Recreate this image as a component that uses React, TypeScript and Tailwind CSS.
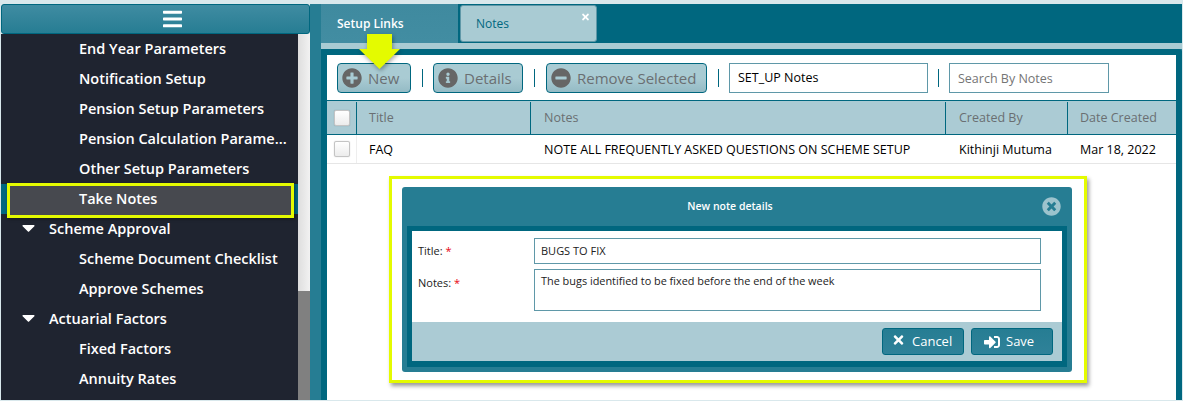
import { FaBars, FaCaretDown, FaInfoCircle, FaMinusCircle, FaPlusCircle, FaSignInAlt, FaTimes, FaTimesCircle } from 'react-icons/fa';

const font = { fontFamily: '"Open Sans", sans-serif' };

const menu = [
	{ label: 'End Year Parameters', level: 2 },
	{ label: 'Notification Setup', level: 2 },
	{ label: 'Pension Setup Parameters', level: 2 },
	{ label: 'Pension Calculation Parame...', level: 2 },
	{ label: 'Other Setup Parameters', level: 2 },
	{ label: 'Take Notes', level: 2, active: true },
	{ label: 'Scheme Approval', level: 1 },
	{ label: 'Scheme Document Checklist', level: 2 },
	{ label: 'Approve Schemes', level: 2 },
	{ label: 'Actuarial Factors', level: 1 },
	{ label: 'Fixed Factors', level: 2 },
	{ label: 'Annuity Rates', level: 2 },
];

function Sidebar() {
	return (
		<div className="w-[309px] shrink-0 flex flex-col">
			<div className="h-[30px] shrink-0 rounded-[3px] border border-[#00677f] bg-gradient-to-b from-[#3f8ca2] to-[#267d93] bg-[#267d93] flex items-center justify-center pl-[34px] text-white">
				<FaBars className="w-[19px] h-[22px]" />
			</div>
			<div className="flex-1 flex min-h-0">
				<div className="w-[297px] bg-[#1f2430] overflow-hidden">
					{menu.map((item) => (
						<div
							key={item.label}
							className={`relative h-[30px] flex items-center text-white text-[14.5px] font-semibold whitespace-nowrap ${item.level === 2 ? 'pl-[78px]' : 'pl-[48px]'} ${item.active ? 'bg-[#00677f]' : ''}`}
						>
							{item.level === 1 && <FaCaretDown className="absolute left-[17px] top-[3px] w-[21px] h-[21px]" />}
							{item.active ? (
								<>
									<div className="absolute left-[6px] top-[-1px] w-[287px] h-[35px] border-[3px] border-[#e4fb00] bg-[#47494f] shadow-[1px_1px_3px_rgba(0,0,0,0.4)]" />
									<span className="relative">{item.label}</span>
								</>
							) : (
								item.label
							)}
						</div>
					))}
				</div>
				<div className="w-[12px] flex flex-col">
					<div className="h-[257px] bg-gradient-to-r from-[#dedede] to-[#f2f2f2]" />
					<div className="flex-1 bg-[#808080]" />
				</div>
			</div>
		</div>
	);
}

function ToolButton({ icon, label, width }: { icon: React.ReactNode; label: string; width: string }) {
	return (
		<div className={`${width} h-[30px] shrink-0 rounded-[4px] border border-[#00677f] bg-gradient-to-b from-[#a9cbd3] via-[#a9cbd3] to-[#94bbc5] flex items-center pl-[4px] gap-[6px] text-[#6a6f72] text-[15px] whitespace-nowrap`}>
			{icon}
			<span className="pt-px">{label}</span>
		</div>
	);
}

function Sep() {
	return <div className="w-px h-[18px] bg-[#00677f] shrink-0" />;
}

function Toolbar() {
	const iconClass = 'w-[20px] h-[20px] text-[#666666]';
	return (
		<div className="h-[45px] flex items-center pl-[10px]">
			<ToolButton width="w-[74px]" label="New" icon={<FaPlusCircle className={iconClass} />} />
			<div className="w-[22px] flex justify-center"><Sep /></div>
			<ToolButton width="w-[90px]" label="Details" icon={<FaInfoCircle className={iconClass} />} />
			<div className="w-[23px] flex justify-center"><Sep /></div>
			<ToolButton width="w-[161px]" label="Remove Selected" icon={<FaMinusCircle className={iconClass} />} />
			<div className="w-[22px] flex justify-center"><Sep /></div>
			<div className="w-[199px] h-[30px] border border-[#5f98a8] flex items-center pl-[8px] pt-px text-[12.5px] text-black">SET_UP Notes</div>
			<div className="w-[21px] flex justify-center"><Sep /></div>
			<div className="w-[160px] h-[30px] border border-[#5f98a8] flex items-center pl-[8px] pt-[3px] text-[12.5px] text-[#757575]">Search By Notes</div>
		</div>
	);
}

function Check() {
	return <div className="w-[16px] h-[16px] rounded-[2px] border border-[#c4c4c4] bg-gradient-to-b from-white to-[#ececec] shadow-[0_0_1px_rgba(0,0,0,0.3)]" />;
}

function NotesTable() {
	const cols = ['w-[30px]', 'w-[174px]', 'w-[415px]', 'w-[122px]', 'flex-1'];
	const pads = ['pl-[12px]', 'pl-[13px]', 'pl-[13px]', 'pl-[12px]'];
	const head = ['Title', 'Notes', 'Created By', 'Date Created'];
	const row = ['FAQ', 'NOTE ALL FREQUENTLY ASKED QUESTIONS ON SCHEME SETUP', 'Kithinji Mutuma', 'Mar 18, 2022'];
	return (
		<div>
			<div className="h-[35px] border-t border-b border-t-[#00677f] border-b-[#00677f] bg-[#abcbd4] flex text-[12.5px] text-[#6a6f72] pt-px">
				<div className={`${cols[0]} border-r border-[#00677f] flex items-center justify-center`}><Check /></div>
				{head.map((h, i) => (
					<div key={h} className={`${cols[i + 1]} ${pads[i]} ${i < 3 ? 'border-r border-[#00677f]' : ''} flex items-center`}>{h}</div>
				))}
			</div>
			<div className="h-[29px] border-b border-[#e6e6e6] flex text-[12.5px] text-black">
				<div className={`${cols[0]} border-r border-[#eeeeee] flex items-center justify-center`}><Check /></div>
				{row.map((c, i) => (
					<div key={c} className={`${cols[i + 1]} ${pads[i]} flex items-center pt-[2px] whitespace-nowrap`}>{c}</div>
				))}
			</div>
		</div>
	);
}

function NoteDialog() {
	return (
		<div className="absolute left-[62px] top-[121px] w-[698px] h-[207px] border-[3px] border-[#e4fb00] bg-white shadow-[2px_3px_4px_rgba(0,0,0,0.4)] px-[10px] pt-[8px]">
			<div className="w-[670px] h-[185px] rounded-[3px] bg-[#267d93] flex flex-col px-[5px] pb-[5px]">
				<div className="h-[39px] shrink-0 relative flex items-center justify-center pr-[14px] text-white text-[10.5px] font-semibold">
					New note details
					<FaTimesCircle className="absolute right-[6px] top-[10px] w-[19px] h-[19px] text-[#9cc3cd]" />
				</div>
				<div className="flex-1 border-x-[5px] border-t-[5px] border-b-[6px] border-[#00677f] bg-white flex flex-col">
					<div className="flex-1 relative text-[11px] text-[#222222]">
						<div className="flex items-center pt-[7px]">
							<div className="w-[122px] pl-[6px]">Title: <span className="text-red-600">*</span></div>
							<div className="w-[507px] h-[26px] border border-[#5f98a8] flex items-center pl-[6px] text-[11px]">BUGS TO FIX</div>
						</div>
						<div className="flex items-start pt-[5px]">
							<div className="w-[122px] pl-[6px] pt-[6px]">Notes: <span className="text-red-600">*</span></div>
							<div className="w-[507px] h-[42px] border border-[#5f98a8] pl-[6px] pt-[3px] text-[10.9px]">The bugs identified to be fixed before the end of the week</div>
						</div>
					</div>
					<div className="h-[39px] shrink-0 bg-[#abcbd4] flex items-center justify-end gap-[7px] pr-[9px]">
						<div className="w-[82px] h-[27px] rounded-[3px] border border-[#00677f] bg-gradient-to-b from-[#267d93] to-[#2f8299] flex items-center pl-[10px] gap-[8px] text-white text-[13px]">
							<FaTimes className="w-[11px] h-[14px] -mt-[4px]" />
							Cancel
						</div>
						<div className="w-[82px] h-[27px] rounded-[3px] border border-[#00677f] bg-gradient-to-b from-[#267d93] to-[#2f8299] flex items-center pl-[11px] gap-[5px] text-white text-[13px]">
							<FaSignInAlt className="w-[18px] h-[16px]" />
							Save
						</div>
					</div>
				</div>
			</div>
		</div>
	);
}

function Arrow() {
	return (
		<svg className="absolute left-[32px] top-[-21px] drop-shadow-[1px_2px_2px_rgba(0,0,0,0.35)]" width="42" height="36" viewBox="0 0 42 36">
			<path d="M8 0H33V15H41L20.5 35L0 15H8Z" fill="#e4fb00" />
		</svg>
	);
}

function Content() {
	return (
		<div className="flex-1 bg-[#267d93] pl-[11px] flex flex-col">
			<div className="h-[39px] shrink-0 bg-[#00677f] flex">
				<div className="w-[137px] bg-gradient-to-b from-[#3f8a9f] to-[#428da2] flex items-center pl-[16px] text-white text-[12px] font-semibold">Setup Links</div>
				<div className="w-[137px] ml-[2px] mt-px mb-px relative rounded-[3px] border border-[#5f98a8] bg-[#a9cbd3] flex items-center pl-[15px] text-[#00677f] text-[12px]">
					Notes
					<FaTimes className="absolute right-[6px] top-[6px] w-[9px] h-[10px] text-white" />
				</div>
			</div>
			<div className="h-[6px] shrink-0 bg-[#a9cbd3]" />
			<div className="flex-1 relative rounded-tr-[4px] border-x-[6px] border-t-[6px] border-[#00677f] bg-white mr-0 flex flex-col">
				<Toolbar />
				<NotesTable />
				<Arrow />
				<NoteDialog />
			</div>
		</div>
	);
}

export default function App() {
	return (
		<div className="w-[1183px] h-[401px] overflow-hidden bg-[#d9e8ec] pt-[4px] pl-px pr-px pb-px flex" style={font}>
			<Sidebar />
			<Content />
		</div>
	);
}
